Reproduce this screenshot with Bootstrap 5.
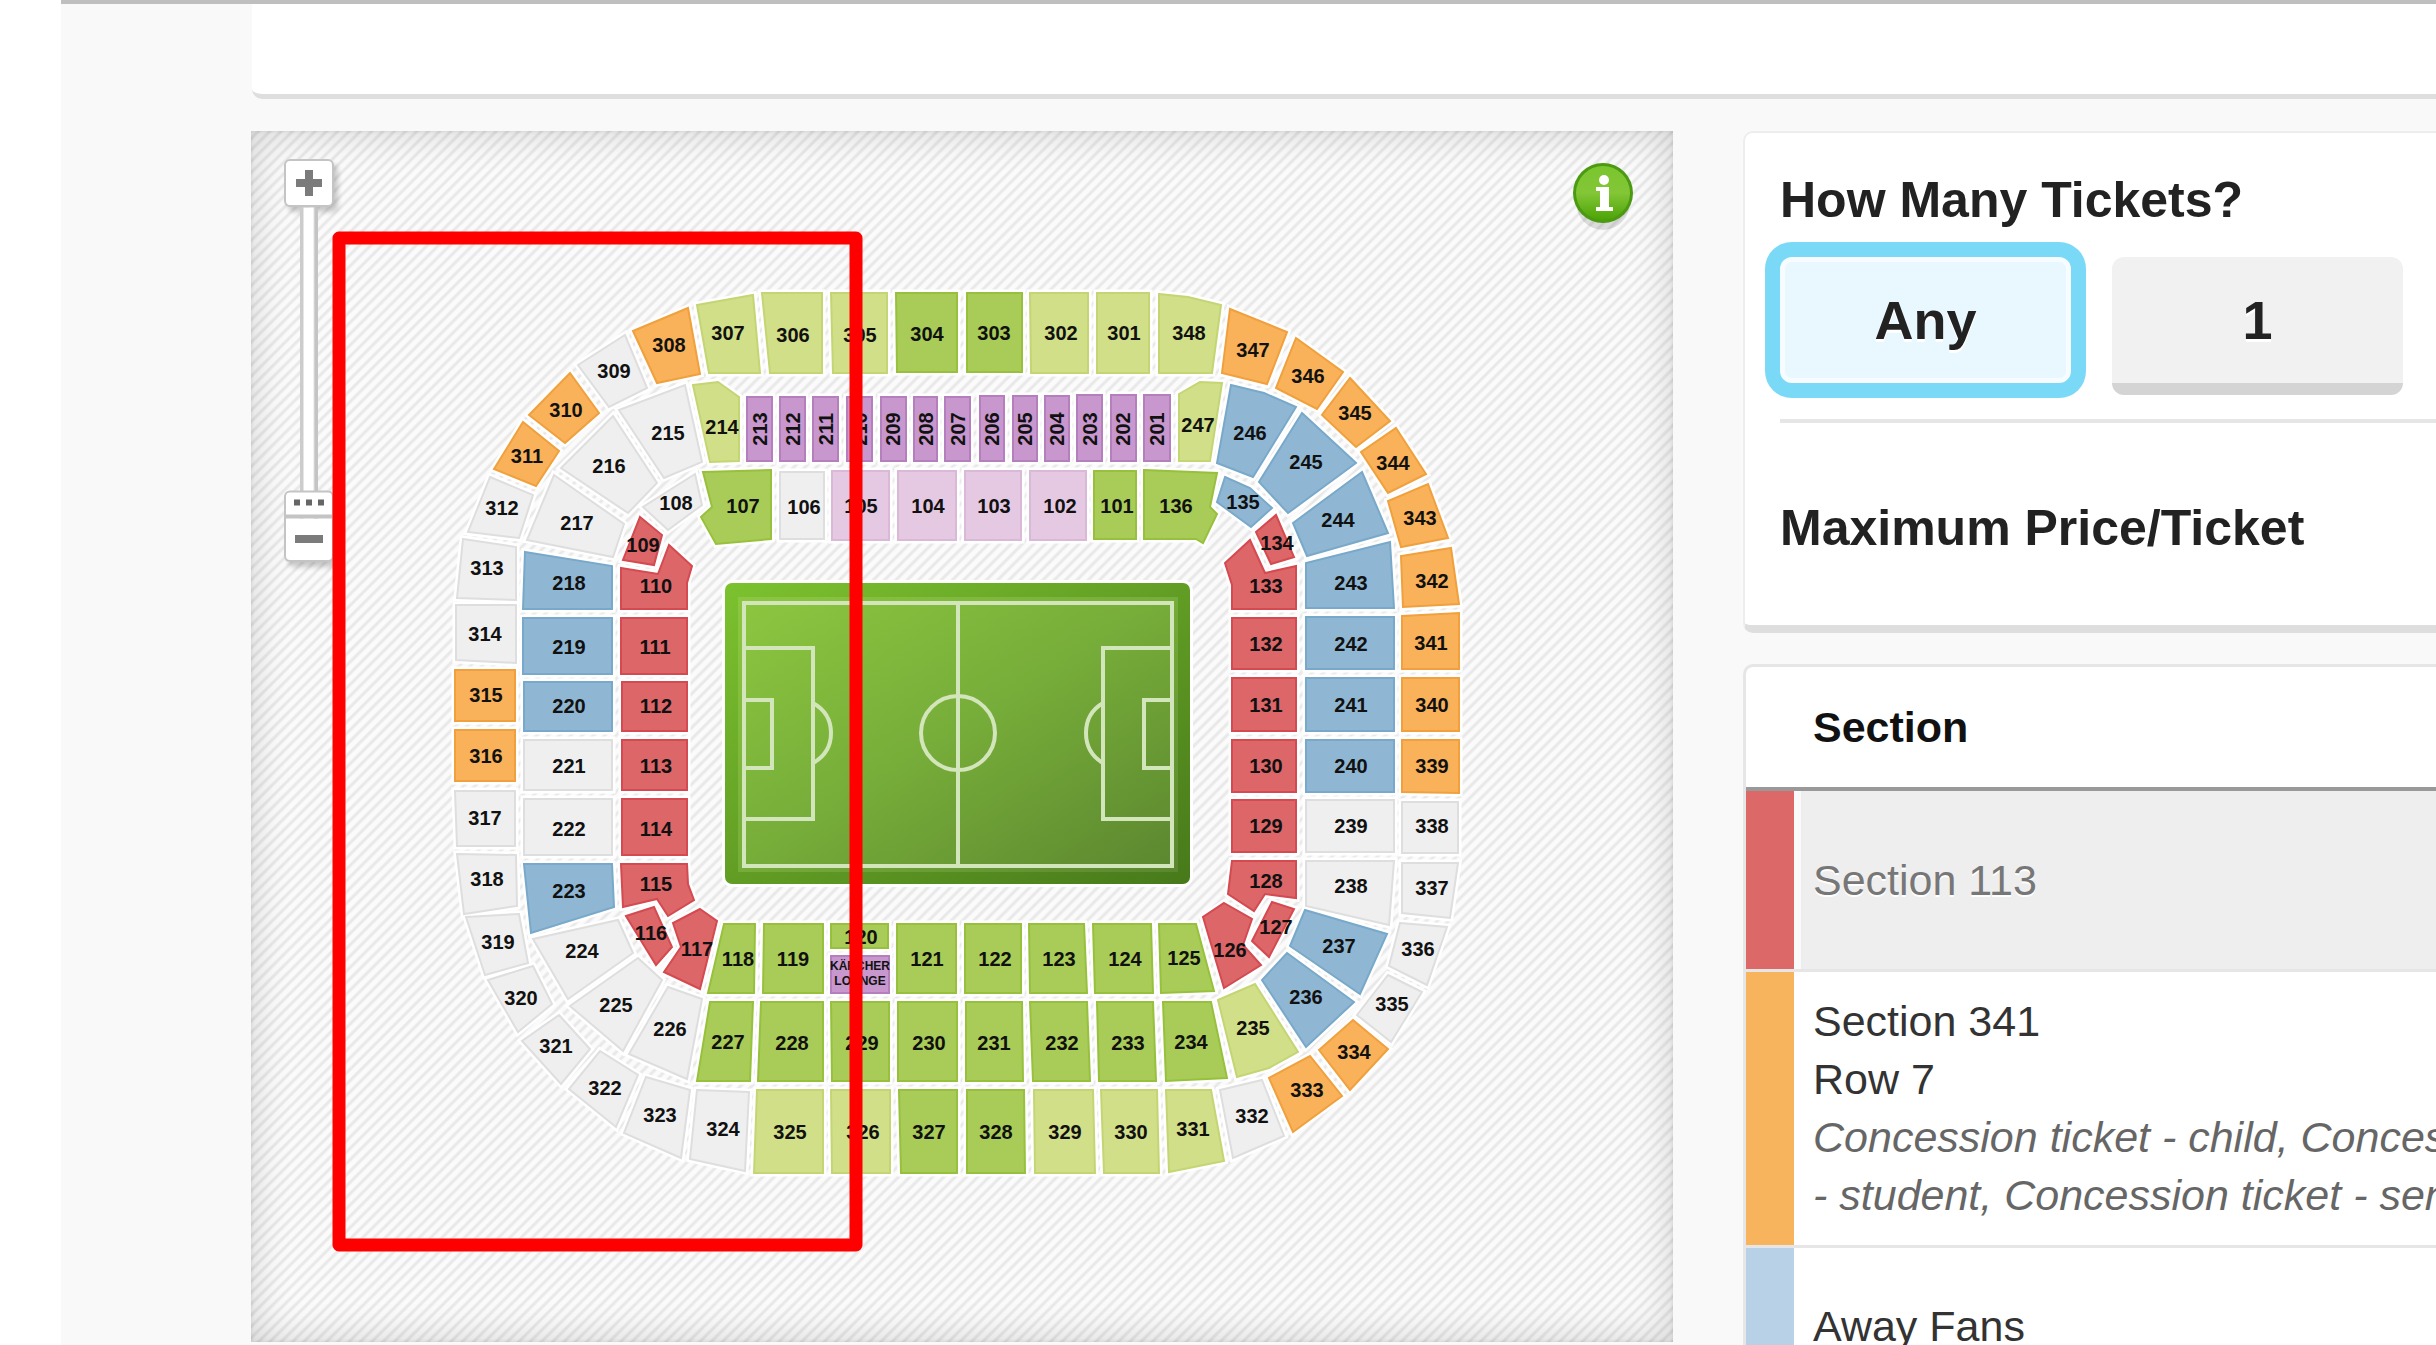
<!DOCTYPE html>
<html lang="en">
<head>
<meta charset="utf-8">
<meta name="viewport" content="width=device-width, initial-scale=1">
<title>Tickets</title>
<link href="https://cdn.jsdelivr.net/npm/bootstrap@5.3.0/dist/css/bootstrap.min.css" rel="stylesheet">
<style>
body{font-family:"Liberation Sans",Arial,sans-serif;color:#222;background:#fff}
.page{height:100vh;margin-left:61px;background:#f9f9f9;border-top:4px solid #bfbfbf}
.topcard{height:95px;margin-left:191px;border-bottom:5px solid #dedede;border-bottom-left-radius:10px}
.content{display:grid;grid-template-columns:minmax(0,1422fr) minmax(0,693fr);column-gap:70px;margin:32px 0 0 190px;align-items:start}
.seatmap{aspect-ratio:1422/1211;background:repeating-linear-gradient(135deg,#fbfbfb 0 3px,#e8e8e8 5px 6px,#fbfbfb 8px)}
.seatmap::before{content:"";position:absolute;inset:0;box-shadow:inset 0 0 40px rgba(0,0,0,.16),inset 0 0 4px rgba(0,0,0,.12)}
.seatmap svg.layer{position:absolute;inset:0;width:100%;height:100%;pointer-events:none}
.zoomer{position:absolute;left:33px;top:28px;width:50px}
.zoombtn{width:50px;height:48px;padding:0;border:2px solid #c4c4c4;border-radius:6px;background:#fff;box-shadow:4px 5px 5px rgba(0,0,0,.2)}
.zoombtn.minus{height:45px;margin-top:-1px;border-top:0;border-radius:0 0 6px 6px}
.track{height:311px}
.track input{position:absolute;left:50%;top:50%;width:311px;height:50px;margin:0;transform:translate(-50%,-50%) rotate(-90deg);appearance:none;-webkit-appearance:none;background:none}
.track input::-webkit-slider-runnable-track{height:18px;background:linear-gradient(#ccc 0 3px,#fff 4px 13px,#c4c4c4 15px)}
.track input::-webkit-slider-thumb{-webkit-appearance:none;width:28px;height:50px;margin-top:-16px;border:2px solid #c4c4c4;border-left-width:4px;border-radius:0 6px 6px 0;background:linear-gradient(#666,#666) 9px 8px/6px 6px no-repeat,linear-gradient(#666,#666) 9px 20px/6px 6px no-repeat,linear-gradient(#666,#666) 9px 32px/6px 6px no-repeat,#fff}
.infobtn{position:absolute;right:38px;top:29px;width:63px;height:66px;padding:0;border:0;background:none}
.panelbox{background:#fff;border:2px solid #ededed;border-right:0;border-radius:10px 0 0 10px}
.filters{padding:37px 0 67px 35px;border-bottom:8px solid #dedede}
.filters h2{font-size:50px;line-height:60px;font-weight:700;margin:0}
.qty{gap:41px;margin-top:27px}
.qty button{flex:0 0 291px;height:138px;padding:0;border:0;border-bottom:12px solid #d4d4d4;border-radius:12px;background:#f1f1f1;font-size:54px;font-weight:700;color:#222;text-shadow:0 3px 0 #fff}
.qty button.picked{height:126px;border:5px solid #f6fcff;background:#e8f8fe;box-shadow:0 0 0 15px #7bd9f8}
.rule{height:4px;background:#e6e6e6;margin:24px 0 75px}
.results{margin-top:31px;overflow:hidden;border:3px solid #e6e6e6;border-right:0}
.results table{font-size:43px;line-height:58px;table-layout:fixed}
.results col.strip{width:48px}
.results th,.results td{white-space:nowrap;border:0;padding:0 0 0 19px;box-shadow:none;background:none;color:#333;vertical-align:middle}
.results .swatch{padding:0}
.results thead th{height:122px;border-bottom:4px solid #999;color:#111}
.results tbody td{border-bottom:3px solid #e6e6e6}
.results .active td{height:181px;color:#777;background:#eee}
.results .active td + td{box-shadow:inset 7px 0 0 #fafafa;text-shadow:0 2px 0 #fff}
.results .listing td{height:276px}
.results .away td{height:160px}
.results td em{color:#666}
.results .active td.c-red{background:#dc6868}
.results td.c-orange{background:#f8b45c}
.results td.c-blue{background:#b9d1e7}
.seat-label{font:700 20px "Liberation Sans",Arial,sans-serif;fill:#111;text-anchor:middle}
</style>
<script src="https://cdn.jsdelivr.net/npm/bootstrap@5.3.0/dist/js/bootstrap.bundle.min.js"></script>
</head>
<body class="overflow-hidden">
<main class="page overflow-hidden">
  <div class="topcard bg-white"></div>
  <div class="content">
    <section class="seatmap position-relative" aria-label="Seating plan">
      <svg class="layer" viewBox="251 131 1422 1211">
        <defs>
          <linearGradient id="turf" x1="0" y1="0" x2="1" y2="1"><stop offset="0" stop-color="#8dc740"/><stop offset=".5" stop-color="#76ac39"/><stop offset="1" stop-color="#5b862f"/></linearGradient>
          <linearGradient id="turfEdge" x1="0" y1="0" x2="1" y2="1"><stop offset="0" stop-color="#7cc22f"/><stop offset="1" stop-color="#47791a"/></linearGradient>
        </defs>
        <rect x="725" y="583" width="465" height="301" rx="7" fill="url(#turfEdge)" stroke="#fff" stroke-width="6" paint-order="stroke"/>
        <rect x="738" y="597" width="440" height="275" fill="url(#turf)"/>
        <g fill="none" stroke="#d3e5ba" stroke-width="4">
          <rect x="744" y="603" width="428" height="263"/>
          <path d="M958 603V866M744 648H813V819H744M744 700H772V768H744M813 703Q831 713 831 733T813 763M1172 648H1103V819H1172M1172 700H1144V768H1172M1103 703Q1086 713 1086 733T1103 763"/>
          <circle cx="958" cy="733" r="37"/>
        </g>
        <g id="seats"></g>
      </svg>
      <div class="zoomer d-flex flex-column">
        <button class="zoombtn" type="button" aria-label="Zoom in"><svg width="28" height="28" viewBox="0 0 28 28"><path d="M10 1h8v9h9v8h-9v9h-8v-9H1v-8h9z" fill="#7b7b7b"/></svg></button>
        <div class="track position-relative"><input type="range" min="0" max="10" value="0" aria-label="Zoom level"></div>
        <button class="zoombtn minus" type="button" aria-label="Zoom out"><svg width="28" height="10" viewBox="0 0 28 10"><path d="M0 1h28v8H0z" fill="#7b7b7b"/></svg></button>
      </div>
      <button class="infobtn" type="button" aria-label="Information">
        <svg width="63" height="72" viewBox="0 0 63 72"><defs><linearGradient id="ig" x1="0" y1="0" x2="0" y2="1"><stop offset="0" stop-color="#7ac62e"/><stop offset=".5" stop-color="#83c636"/><stop offset="1" stop-color="#4ba306"/></linearGradient></defs><ellipse cx="31" cy="42" rx="27" ry="28" fill="#000" opacity=".12"/><circle cx="31" cy="33" r="30" fill="#4b9a12"/><circle cx="31" cy="33" r="27" fill="url(#ig)"/><circle cx="32" cy="20" r="5" fill="#fff"/><path d="M24 27h13v20h4v4H24v-4h4V31h-4z" fill="#fff"/></svg>
      </button>
      <svg class="layer" viewBox="251 131 1422 1211"><rect x="339" y="238" width="517" height="1007" fill="none" stroke="#f00" stroke-width="13" stroke-linejoin="round"/></svg>
    </section>
    <aside>
      <section class="panelbox filters">
        <h2>How Many Tickets?</h2>
        <div class="qty d-flex align-items-start">
          <button type="button" class="picked">Any</button>
          <button type="button">1</button>
        </div>
        <div class="rule"></div>
        <h2>Maximum Price/Ticket</h2>
      </section>
      <section class="panelbox results">
        <table class="table mb-0">
          <colgroup><col class="strip"><col></colgroup>
          <thead><tr><th class="swatch"></th><th scope="col">Section</th></tr></thead>
          <tbody>
            <tr class="active"><td class="swatch c-red"></td><td>Section 113</td></tr>
            <tr class="listing"><td class="swatch c-orange"></td><td>Section 341<br>Row 7<br><em>Concession ticket - child, Concession ticket<br>- student, Concession ticket - senior</em></td></tr>
            <tr class="away"><td class="swatch c-blue"></td><td>Away Fans</td></tr>
          </tbody>
        </table>
      </section>
    </aside>
  </div>
</main>
<script>
// Fill and edge colour of each price band.
const BANDS={W:['#efefef','#dedede'],L:['#d1df89','#c3d673'],G:['#a8cc57','#97c13c'],O:['#f9b25a','#f0a03c'],R:['#dc6668','#d44a50'],B:['#8fb7d3','#79a9ca'],P:['#e5c9e2','#dab8d7'],V:['#c797cd','#b57fbe']};
// Each quarter of the stadium is plotted on its own grid: [origin x, origin y, units per px x, units per px y, seats].
// Seat: band|label|outline points|label centre
const QUARTERS=[
[430,270,2.904,3,`L|307|775,105 937,75 958,310 810,310|866,190
L|306|963,70 1138,70 1138,310 987,310|1053,195
L|305|1165,70 1328,70 1328,310 1170,310|1250,195
G|304|1353,70 1531,70 1531,306 1357,306|1444,193
O|308|590,183 750,113 783,312 660,340|694,226
W|309|430,285 565,195 630,355 520,410|534,304
O|310|408,308 492,428 392,518 288,435|396,420
O|311|270,455 376,543 308,648 186,597|282,557
W|312|175,620 300,675 258,805 110,785|210,713
W|313|97,808 250,830 250,990 78,985|166,895
W|314|75,1005 250,1005 250,1178 75,1170|160,1093
W|215|548,420 740,345 790,575 680,625|690,488
W|216|530,437 660,640 575,728 380,595|520,588
W|217|360,615 562,762 530,860 283,810|427,760
B|218|276,845 528,887 528,1018 270,1018|405,940
B|219|270,1045 528,1045 528,1212 270,1212|405,1132
L|214|765,345 835,337 898,380 898,572 812,575|848,470
V|213|922,380 992,380 992,573 922,573|957,478
V|212|1015,380 1088,380 1088,573 1015,573|1053,478
V|211|1112,380 1186,380 1186,573 1112,573|1149,478
V|210|1212,380 1284,380 1284,573 1212,573|1250,478
V|209|1309,380 1382,380 1382,573 1309,573|1346,478
V|208|1405,380 1471,380 1471,573 1405,573|1440,478
V|207|1497,380 1569,380 1569,573 1497,573|1533,478
G|107|793,605 990,600 990,808 830,822 788,742 820,712|908,708
W|106|1015,605 1145,605 1145,808 1015,808|1086,710
P|105|1168,602 1334,602 1334,810 1168,810|1252,708
P|104|1358,602 1527,602 1527,810 1358,810|1446,708
W|108|770,612 790,705 690,780 618,712|714,698
R|109|610,742 675,795 650,885 560,870|620,825
R|110|555,895 663,912 695,825 762,888 745,940 745,1018 555,1018|655,948
R|111|555,1045 745,1045 745,1212 555,1212|652,1132`],
[940,270,2.904,3,`G|303|77,70 238,70 238,306 77,306|158,190
L|302|262,70 430,70 430,308 264,308|350,190
L|301|455,70 608,70 608,308 457,308|533,190
L|348|635,72 720,82 815,105 790,310 635,310|722,190
O|347|843,117 1007,185 950,343 818,310|908,240
O|346|1033,205 1170,305 1095,417 975,355|1068,318
O|345|1190,323 1307,452 1208,530 1110,435|1206,428
O|344|1325,473 1410,612 1300,668 1223,545|1316,580
O|343|1418,643 1476,805 1340,830 1302,692|1394,745
O|342|1483,833 1508,1002 1345,1010 1338,858|1428,933
O|341|1343,1037 1508,1030 1508,1196 1343,1196|1426,1120
L|247|693,372 755,335 820,340 783,573 693,573|748,465
B|246|845,345 940,370 1033,412 908,622 803,580|900,488
B|245|1050,430 1208,580 1010,730 925,637|1063,575
B|244|1225,605 1300,790 1065,857 1025,760|1157,750
B|243|1308,817 1317,1015 1062,1015 1062,880|1193,938
B|242|1062,1040 1317,1040 1317,1196 1062,1196|1193,1122
V|206|115,378 187,378 187,573 115,573|151,478
V|205|212,378 282,378 282,573 212,573|247,478
V|204|306,378 376,378 376,573 306,573|341,478
V|203|399,376 471,376 471,573 399,573|435,478
V|202|496,376 568,376 568,573 496,573|532,478
V|201|592,376 668,376 668,573 592,573|630,478
P|103|72,602 235,602 235,810 72,810|156,708
P|102|260,602 423,602 423,810 260,810|348,708
G|101|448,602 568,602 568,808 448,808|513,708
G|136|593,600 805,610 783,712 803,732 765,820 742,808 593,808|686,708
B|135|828,620 900,655 965,715 903,770 803,697|880,695
R|134|975,735 1028,860 960,882 918,785|980,820
R|133|900,810 943,910 1035,887 1035,1018 847,1018 847,945 827,880|946,948
R|132|847,1045 1035,1045 1035,1196 847,1196|946,1122`],
[430,660,2.904,2.904,`O|315|72,30 247,30 247,178 72,178|163,103
O|316|72,203 247,203 247,350 72,350|163,278
W|317|72,380 247,380 247,540 77,540|160,458
W|318|78,562 250,567 252,715 98,738|166,637
W|319|105,745 258,738 285,880 160,915|198,820
W|320|168,930 300,890 355,1000 255,1080|265,983
W|321|375,1030 465,1130 380,1230 268,1105|367,1120
W|322|495,1135 605,1205 540,1355 405,1245|508,1242
W|323|628,1212 755,1250 728,1445 562,1375|667,1322
W|324|775,1248 925,1255 915,1485 755,1450|850,1362
L|325|950,1250 1140,1250 1140,1490 942,1490|1045,1370
L|326|1165,1250 1337,1250 1337,1490 1168,1490|1257,1370
G|327|1363,1250 1531,1250 1531,1490 1367,1490|1448,1370
B|220|272,65 528,65 528,207 272,207|405,135
W|221|272,232 528,232 528,378 272,378|405,307
W|222|272,405 528,405 528,565 272,565|405,490
B|223|272,593 528,593 533,717 293,792|405,672
W|224|300,810 545,755 590,850 400,985|441,845
W|225|605,865 675,930 560,1135 408,1005|540,1002
W|226|690,950 790,985 745,1218 578,1145|698,1072
R|112|557,65 745,65 745,207 557,207|655,135
R|113|557,232 745,232 745,378 557,378|655,308
R|114|557,405 745,405 745,565 557,565|655,490
R|115|555,593 745,593 750,650 768,697 692,742 660,693 560,718|655,650
R|116|568,742 650,717 703,833 657,885|641,793
R|117|785,722 833,757 783,955 680,905 728,833 706,765|775,838
G|118|855,767 945,767 940,967 807,967|893,868
G|119|970,767 1140,767 1140,967 967,967|1053,868
G|120|1165,767 1330,767 1330,837 1165,837|1252,803
V|KÄRCHER/LOUNGE|1165,860 1333,860 1333,967 1165,967|1249,909
G|121|1355,767 1527,767 1527,967 1357,967|1443,868
G|227|812,993 937,993 928,1222 775,1222|866,1108
G|228|960,993 1140,993 1140,1222 952,1222|1050,1113
G|229|1165,993 1333,993 1333,1222 1167,1222|1255,1113
G|230|1358,993 1529,993 1529,1222 1360,1222|1450,1113`],
[940,660,2.904,2.904,`G|122|72,767 235,767 235,967 74,967|160,868
G|123|258,767 418,767 428,967 262,967|347,868
G|124|445,767 613,767 620,967 450,967|537,868
G|125|637,767 742,767 797,962 642,967|708,865
G|231|75,993 238,993 240,1222 75,1222|156,1113
G|232|262,993 428,993 437,1222 270,1222|354,1113
G|233|455,993 620,993 628,1222 463,1222|546,1113
G|234|648,993 787,993 832,1215 655,1222|730,1108
G|328|77,1250 245,1250 248,1490 77,1490|163,1370
L|329|272,1250 445,1250 450,1490 275,1490|363,1370
L|330|467,1250 630,1250 637,1490 475,1490|554,1370
L|331|655,1250 787,1250 825,1455 665,1487|735,1362
W|332|812,1250 935,1220 1000,1383 850,1445|905,1325
O|333|955,1215 1075,1150 1167,1265 1025,1370|1065,1250
O|334|1100,1132 1200,1045 1302,1130 1190,1250|1202,1138
W|335|1300,915 1400,965 1310,1110 1210,1032|1313,1000
W|336|1335,765 1473,775 1415,945 1305,890|1388,840
W|337|1343,590 1505,590 1480,750 1343,735|1428,663
W|338|1343,412 1505,412 1505,560 1343,560|1428,482
O|339|1343,232 1508,232 1508,385 1343,382|1428,308
O|340|1343,52 1508,52 1508,207 1343,207|1428,132
B|241|1062,52 1317,52 1317,207 1062,207|1193,132
B|240|1062,232 1317,232 1317,382 1062,382|1193,308
W|239|1062,408 1317,408 1317,558 1062,558|1193,482
W|238|1062,585 1317,585 1305,770 1062,715|1193,655
B|237|1060,727 1298,795 1220,970 1017,830|1160,830
B|236|1007,852 1203,992 1063,1125 935,928|1063,980
L|235|808,988 915,940 1040,1137 955,1185 862,1212|910,1068
R|131|847,52 1035,52 1035,207 847,207|946,132
R|130|847,232 1035,232 1035,382 847,382|946,308
R|129|847,408 1035,408 1035,558 847,558|946,482
R|128|847,583 1035,583 1033,690 945,680 913,728 835,680|946,642
R|127|965,703 1028,722 955,862 905,815|975,775
R|126|825,705 907,752 880,828 933,885 825,952 765,747|842,843`]];
let halos='',shapes='',labels='';
for(const [ox,oy,sx,sy,list] of QUARTERS)for(const line of list.split('\n')){
  const [band,name,outline,centre]=line.split('|');
  const place=p=>{const [x,y]=p.split(',');return [Math.round(ox+x/sx),Math.round(oy+y/sy)]};
  const pts=outline.split(' ').map(p=>place(p).join()).join(' ');
  const [cx,cy]=place(centre);
  const [fill,edge]=BANDS[band];
  halos+=`<polygon points="${pts}" fill="#fff" stroke="#fff" stroke-width="7"/>`;
  shapes+=`<polygon points="${pts}" fill="${fill}" stroke="${edge}" stroke-width="2"/>`;
  if(name.includes('/'))name.split('/').forEach((w,i)=>labels+=`<text class="seat-label" style="font-size:12px" x="${cx}" y="${cy-3+i*15}">${w}</text>`);
  else if(band==='V')labels+=`<text class="seat-label" x="${cx}" y="${cy+7}" transform="rotate(-90 ${cx} ${cy})">${name}</text>`;
  else labels+=`<text class="seat-label" x="${cx}" y="${cy+7}">${name}</text>`;
}
document.getElementById('seats').innerHTML=halos+shapes+labels;
</script>
</body>
</html>
